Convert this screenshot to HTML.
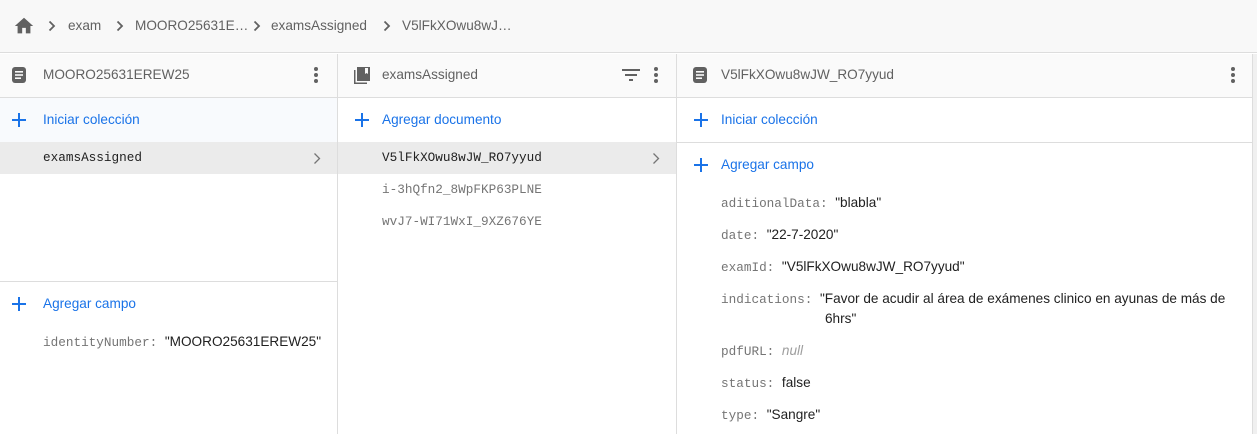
<!DOCTYPE html>
<html><head><meta charset="utf-8"><style>
*{margin:0;padding:0;box-sizing:border-box}
body{width:1257px;height:434px;overflow:hidden;background:#fff;font-family:"Liberation Sans",sans-serif;font-size:13.6px;color:#212121;position:relative}
.a{position:absolute;white-space:nowrap}
.g{color:#616161}
.b{color:#1a73e8}
.m{font-family:"Liberation Mono",monospace;font-size:12.7px}
.k{font-family:"Liberation Mono",monospace;font-size:12.7px;color:#757575}
.plus{position:absolute;width:14px;height:14px}
.plus:before{content:"";position:absolute;left:0;top:6px;width:14px;height:2px;background:#1a73e8}
.plus:after{content:"";position:absolute;left:6px;top:0;width:2px;height:14px;background:#1a73e8}
.dots{position:absolute;width:4px}
.dots i{display:block;width:4px;height:4px;border-radius:2px;background:#616161;margin-bottom:2px}
.chev{position:absolute;top:20px}
</style></head><body>
<div class="a" style="left:0;top:0;width:1257px;height:53px;background:#f8f8f8;border-bottom:1px solid #ddd"></div>
<svg class="a" style="left:13px;top:15px" width="22" height="22" viewBox="0 0 24 24"><path d="M10 20v-6h4v6h5v-8h3L12 3 2 12h3v8z" fill="#616161"/></svg>
<svg class="chev" style="left:48px" width="8" height="12" viewBox="0 0 8 12"><path d="M1.5 1.5l4.5 4.5-4.5 4.5" stroke="#616161" stroke-width="1.8" fill="none"/></svg>
<div class="a g" style="left:68px;top:18px">exam</div>
<svg class="chev" style="left:116px" width="8" height="12" viewBox="0 0 8 12"><path d="M1.5 1.5l4.5 4.5-4.5 4.5" stroke="#616161" stroke-width="1.8" fill="none"/></svg>
<div class="a g" style="left:135px;top:18px">MOORO25631E…</div>
<svg class="chev" style="left:253px" width="8" height="12" viewBox="0 0 8 12"><path d="M1.5 1.5l4.5 4.5-4.5 4.5" stroke="#616161" stroke-width="1.8" fill="none"/></svg>
<div class="a g" style="left:271px;top:18px">examsAssigned</div>
<svg class="chev" style="left:383px" width="8" height="12" viewBox="0 0 8 12"><path d="M1.5 1.5l4.5 4.5-4.5 4.5" stroke="#616161" stroke-width="1.8" fill="none"/></svg>
<div class="a g" style="left:402px;top:18px">V5lFkXOwu8wJ…</div>
<!-- headers -->
<div class="a" style="left:0;top:54px;width:1252px;height:44px;background:#fafafa;border-bottom:1px solid #ddd"></div>
<div class="a" style="left:1252px;top:54px;width:5px;height:380px;background:#f0f0f0;border-left:1px solid #ddd"></div>
<div class="a" style="left:337px;top:54px;width:1px;height:380px;background:#ddd"></div>
<div class="a" style="left:676px;top:54px;width:1px;height:380px;background:#ddd"></div>
<svg class="a" style="left:12px;top:67px" width="16" height="18" viewBox="0 0 16 18"><rect x="0" y="0" width="14" height="16" rx="3" fill="#616161"/><rect x="3" y="4" width="8" height="1.6" fill="#fafafa"/><rect x="3" y="7.2" width="8" height="1.6" fill="#fafafa"/><rect x="3" y="10.4" width="6" height="1.6" fill="#fafafa"/></svg>
<div class="a g" style="left:43px;top:67px">MOORO25631EREW25</div>
<div class="dots" style="left:314px;top:67px"><i></i><i></i><i></i></div>
<svg class="a" style="left:353px;top:67px" width="18" height="18" viewBox="0 0 18 18"><path d="M1 3v14h13v-1.5H2.5V3z" fill="#616161"/><rect x="4" y="0" width="13" height="14" fill="#616161"/><path d="M12 1h3v6l-1.5-1-1.5 1z" fill="#fafafa"/></svg>
<div class="a g" style="left:382px;top:67px">examsAssigned</div>
<svg class="a" style="left:622px;top:68px" width="18" height="14" viewBox="0 0 18 14"><rect x="0" y="1" width="18" height="2" fill="#616161"/><rect x="3" y="6" width="12" height="2" fill="#616161"/><rect x="7" y="11" width="4" height="2" fill="#616161"/></svg>
<div class="dots" style="left:654px;top:67px"><i></i><i></i><i></i></div>
<svg class="a" style="left:693px;top:67px" width="16" height="18" viewBox="0 0 16 18"><rect x="0" y="0" width="14" height="16" rx="3" fill="#616161"/><rect x="3" y="4" width="8" height="1.6" fill="#fafafa"/><rect x="3" y="7.2" width="8" height="1.6" fill="#fafafa"/><rect x="3" y="10.4" width="6" height="1.6" fill="#fafafa"/></svg>
<div class="a g" style="left:721px;top:67px">V5lFkXOwu8wJW_RO7yyud</div>
<div class="dots" style="left:1231px;top:67px"><i></i><i></i><i></i></div>
<!-- col1 -->
<div class="a" style="left:0;top:98px;width:337px;height:44px;background:#f8fafd"></div>
<div class="plus" style="left:12px;top:113px"></div>
<div class="a b" style="left:43px;top:112px">Iniciar colección</div>
<div class="a" style="left:0;top:142px;width:337px;height:32px;background:#ebebeb"></div>
<div class="a m" style="left:43px;top:150px">examsAssigned</div>
<svg class="a" style="left:313px;top:152px" width="8" height="13" viewBox="0 0 8 13"><path d="M1.5 1.5l5 5-5 5" stroke="#757575" stroke-width="1.3" fill="none"/></svg>
<div class="a" style="left:0;top:281px;width:337px;height:1px;background:#ddd"></div>
<div class="plus" style="left:12px;top:297px"></div>
<div class="a b" style="left:43px;top:296px">Agregar campo</div>
<div class="a" style="left:43px;top:334px"><span class="k">identityNumber: </span>"MOORO25631EREW25"</div>
<!-- col2 -->
<div class="plus" style="left:355px;top:113px"></div>
<div class="a b" style="left:382px;top:112px">Agregar documento</div>
<div class="a" style="left:338px;top:142px;width:338px;height:32px;background:#ebebeb"></div>
<div class="a m" style="left:382px;top:150px">V5lFkXOwu8wJW_RO7yyud</div>
<svg class="a" style="left:652px;top:152px" width="8" height="13" viewBox="0 0 8 13"><path d="M1.5 1.5l5 5-5 5" stroke="#757575" stroke-width="1.3" fill="none"/></svg>
<div class="a k" style="left:382px;top:182px">i-3hQfn2_8WpFKP63PLNE</div>
<div class="a k" style="left:382px;top:214px">wvJ7-WI71WxI_9XZ676YE</div>
<!-- col3 -->
<div class="plus" style="left:694px;top:113px"></div>
<div class="a b" style="left:721px;top:112px">Iniciar colección</div>
<div class="a" style="left:677px;top:142px;width:575px;height:1px;background:#ddd"></div>
<div class="plus" style="left:694px;top:158px"></div>
<div class="a b" style="left:721px;top:157px">Agregar campo</div>
<div class="a" style="left:721px;top:195px"><span class="k">aditionalData: </span>"blabla"</div>
<div class="a" style="left:721px;top:227px"><span class="k">date: </span>"22-7-2020"</div>
<div class="a" style="left:721px;top:259px"><span class="k">examId: </span>"V5lFkXOwu8wJW_RO7yyud"</div>
<div class="a" style="left:721px;top:291px"><span class="k">indications: </span>"Favor de acudir al área de exámenes clinico en ayunas de más de</div>
<div class="a" style="left:825px;top:311px">6hrs"</div>
<div class="a" style="left:721px;top:343px"><span class="k">pdfURL: </span><i style="color:#9e9e9e">null</i></div>
<div class="a" style="left:721px;top:375px"><span class="k">status: </span>false</div>
<div class="a" style="left:721px;top:407px"><span class="k">type: </span>"Sangre"</div>
</body></html>
